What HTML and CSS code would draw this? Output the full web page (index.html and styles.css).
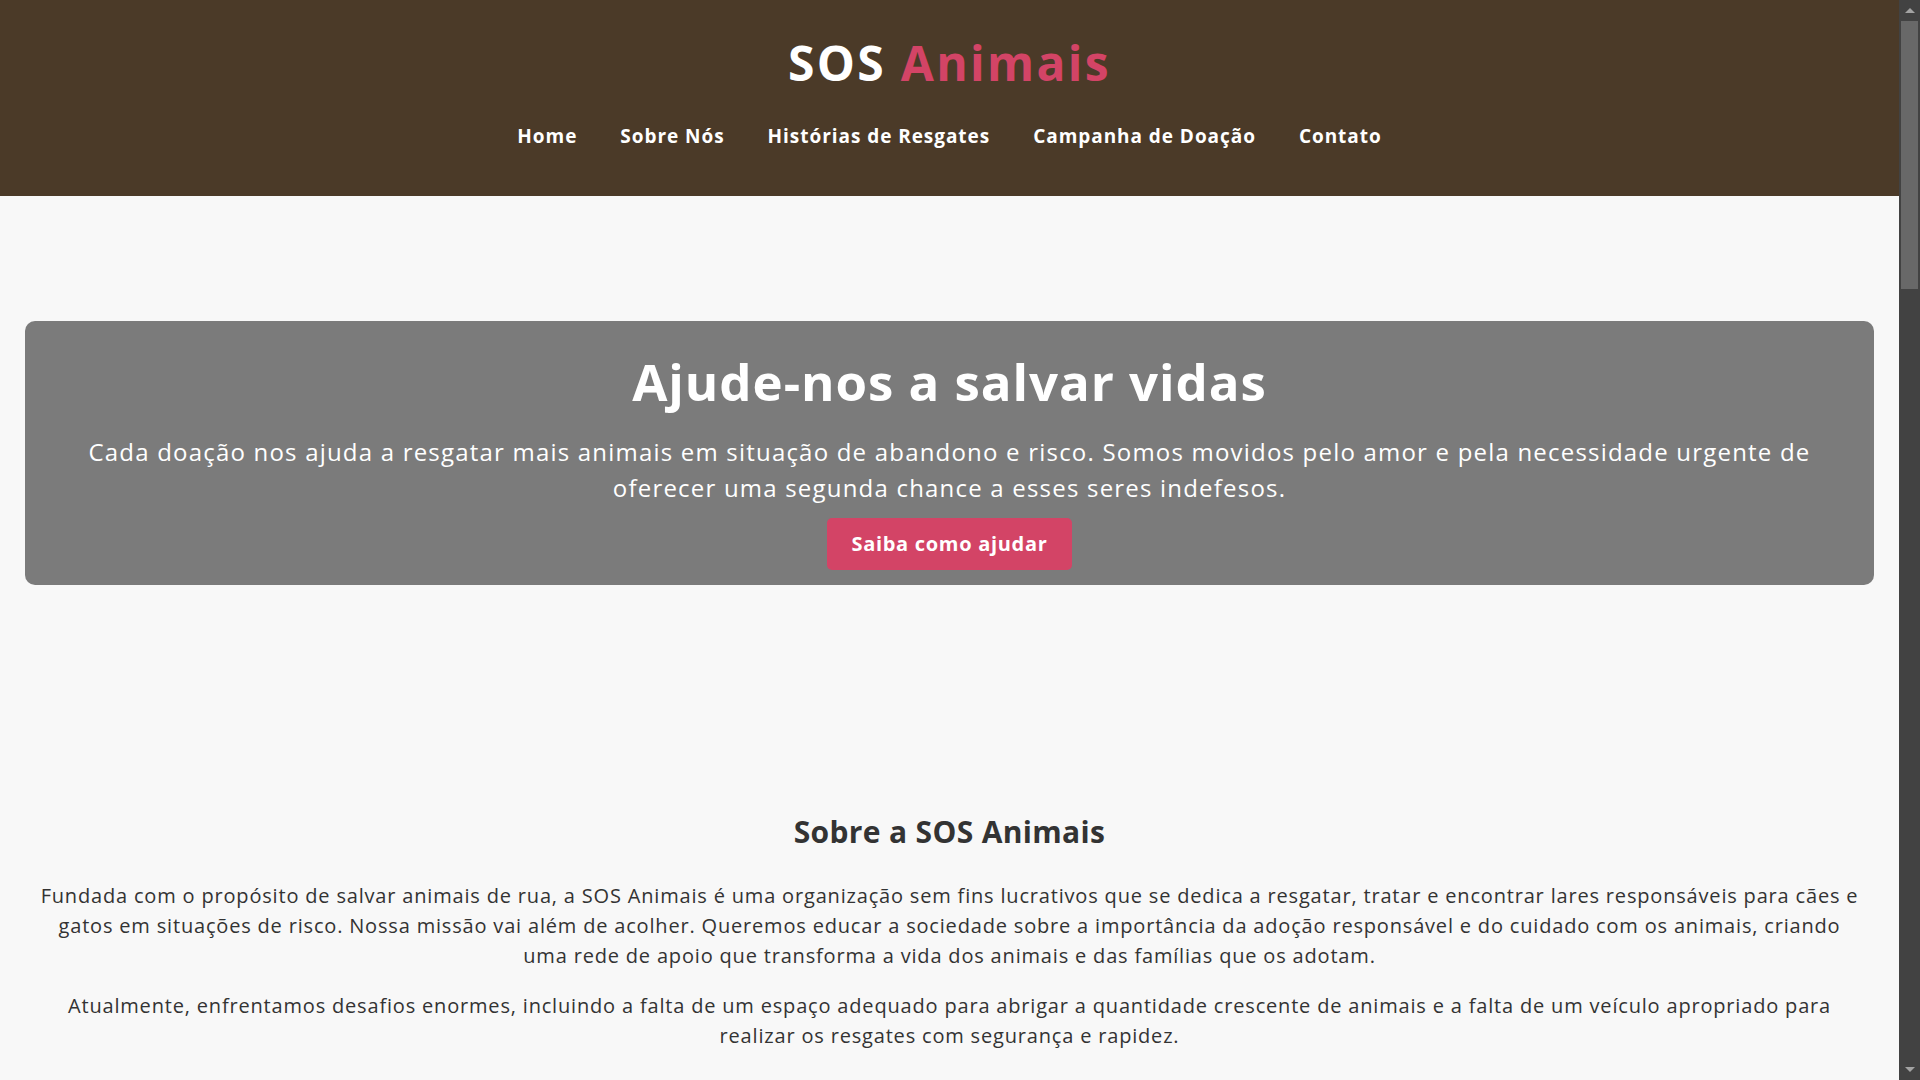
FILE: index.html
```html
<!DOCTYPE html>
<html lang="pt-BR">
<head>
<meta charset="utf-8">
<title>SOS Animais</title>
<link rel="stylesheet" href="styles.css">
</head>
<body>
<header class="site-header">
  <h1 class="logo">SOS <span class="logo-accent">Animais</span></h1>
  <nav class="main-nav">
    <a href="#" class="nav-link">Home</a>
    <a href="#sobre" class="nav-link">Sobre Nós</a>
    <a href="#historias" class="nav-link">Histórias de Resgates</a>
    <a href="#campanha" class="nav-link">Campanha de Doação</a>
    <a href="#contato" class="nav-link">Contato</a>
  </nav>
</header>

<main>
  <section class="hero">
    <h2 class="hero-title">Ajude-nos a salvar vidas</h2>
    <p class="hero-text">Cada doação nos ajuda a resgatar mais animais em situação de abandono e risco. Somos movidos pelo amor e pela necessidade urgente de oferecer uma segunda chance a esses seres indefesos.</p>
    <a href="#campanha" class="btn">Saiba como ajudar</a>
  </section>

  <section class="about" id="sobre">
    <h2 class="section-title">Sobre a SOS Animais</h2>
    <p class="section-text">Fundada com o propósito de salvar animais de rua, a SOS Animais é uma organização sem fins lucrativos que se dedica a resgatar, tratar e encontrar lares responsáveis para cães e gatos em situações de risco. Nossa missão vai além de acolher. Queremos educar a sociedade sobre a importância da adoção responsável e do cuidado com os animais, criando uma&nbsp;rede de apoio que transforma a vida dos animais e das famílias que os adotam.</p>
    <p class="section-text">Atualmente, enfrentamos desafios enormes, incluindo a falta de um espaço adequado para abrigar a quantidade crescente de animais e a falta de um veículo apropriado para realizar os resgates com segurança e rapidez.</p>
  </section>
</main>

<div class="scrollbar" aria-hidden="true">
  <span class="sb-arrow sb-up"></span>
  <span class="sb-track"><span class="sb-thumb"></span></span>
  <span class="sb-arrow sb-down"></span>
</div>
</body>
</html>
```

FILE: styles.css
```css
body {
  margin: 0;
  padding-right: 21px;
  background: #f8f8f8;
  color: #333;
  font-family: "Open Sans", "Liberation Sans", sans-serif;
}

.site-header {
  background: #4b3a28;
  padding: 34px 0 46px;
  text-align: center;
}

.logo {
  margin: 0;
  font-size: 48px;
  line-height: 1.2;
  font-weight: 700;
  letter-spacing: 2.3px;
  color: #fff;
}

.logo-accent {
  color: #d34466;
}

.main-nav {
  display: flex;
  justify-content: center;
  gap: 43px;
  margin-top: 30px;
}

.nav-link {
  color: #fff;
  text-decoration: none;
  font-size: 19px;
  line-height: 28.8px;
  font-weight: 700;
  letter-spacing: 0.95px;
}

.hero {
  margin: 125px 25px 0;
  padding: 30px 40px 15px;
  background: #7b7b7b;
  border-radius: 10px;
  text-align: center;
  color: #fff;
}

.hero-title {
  margin: 0;
  font-size: 51px;
  line-height: 1.2;
  font-weight: 700;
  letter-spacing: 0.95px;
}

.hero-text {
  margin: 21px 0 12px;
  font-size: 24px;
  line-height: 36px;
  letter-spacing: 1.2px;
}

.btn {
  display: inline-block;
  padding: 11px 24px;
  background: #d34466;
  color: #fff;
  border-radius: 5px;
  text-decoration: none;
  font-size: 20px;
  line-height: 30px;
  font-weight: 700;
  letter-spacing: 0.7px;
}

.about {
  padding: 229px 32px 40px;
  text-align: center;
}

.section-title {
  margin: 0 0 31px;
  font-size: 30px;
  line-height: 36px;
  font-weight: 700;
  letter-spacing: 0.35px;
}

.section-text {
  margin: 0 0 20px;
  font-size: 20px;
  line-height: 30px;
  letter-spacing: 0.82px;
}

/* replica of the browser's dark scrollbar */
.scrollbar {
  position: fixed;
  top: 0;
  right: 0;
  width: 21px;
  height: 100vh;
  background: #424242;
  display: flex;
  flex-direction: column;
}

.sb-arrow {
  height: 21px;
  flex: none;
  display: flex;
  align-items: center;
  justify-content: center;
}

.sb-up::before,
.sb-down::before {
  content: "";
  width: 0;
  height: 0;
  border-left: 5px solid transparent;
  border-right: 5px solid transparent;
}

.sb-up::before {
  border-bottom: 5px solid #a3a3a3;
}

.sb-down::before {
  border-top: 5px solid #a3a3a3;
}

.sb-track {
  flex: 1;
  padding: 0 2px;
}

.sb-thumb {
  display: block;
  height: 268px;
  background: #686868;
}
```
